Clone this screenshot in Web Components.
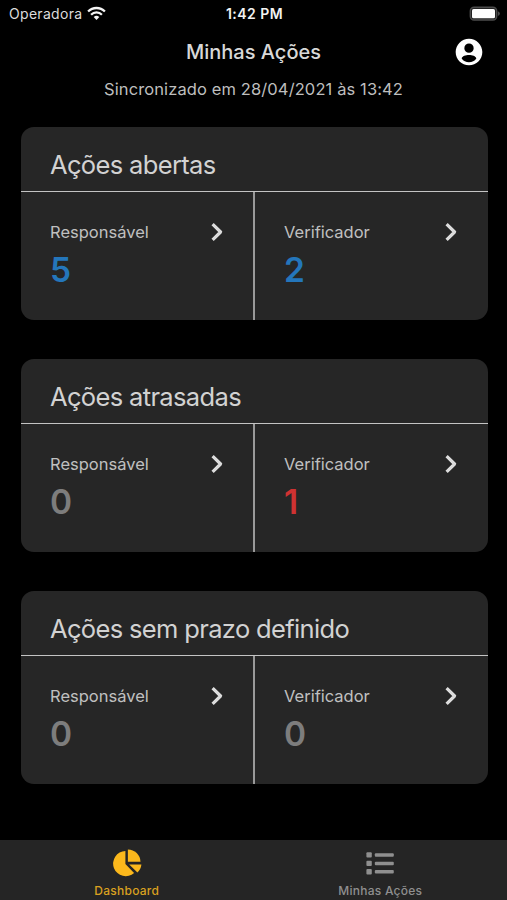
<!DOCTYPE html>
<html lang="pt-BR">
<head>
<meta charset="utf-8">
<meta name="viewport" content="width=device-width, initial-scale=1">
<title>Minhas Ações</title>
<style>
  html, body { height: 100%; }
  body {
    margin: 0;
    background: #000;
    color: #d6d6d6;
    font-family: Inter, "Liberation Sans", sans-serif;
    overflow: hidden;
  }
</style>
</head>
<body>
<app-screen>
  <status-bar slot="top" carrier="Operadora" time="1:42 PM"></status-bar>
  <page-header slot="top" heading="Minhas Ações">Sincronizado em 28/04/2021 às 13:42</page-header>

  <action-card heading="Ações abertas">
    <action-count label="Responsável" tone="info">5</action-count>
    <action-count label="Verificador" tone="info">2</action-count>
  </action-card>
  <action-card heading="Ações atrasadas">
    <action-count label="Responsável">0</action-count>
    <action-count label="Verificador" tone="danger">1</action-count>
  </action-card>
  <action-card heading="Ações sem prazo definido">
    <action-count label="Responsável">0</action-count>
    <action-count label="Verificador">0</action-count>
  </action-card>

  <tab-bar slot="bottom">
    <tab-item label="Dashboard" active>
      <svg width="30" height="30" viewBox="0 0 30 30" fill="currentColor">
        <path d="M13.4 3V15.9L22.1 25A12.6 12.6 0 1 1 13.4 3Z"/>
        <path d="M15.9 1.4A12.6 12.6 0 0 1 28.5 13.7H15.9Z"/>
        <path d="M17.2 16.5H29.4A12.5 12.5 0 0 1 25.4 24.5Z"/>
      </svg>
    </tab-item>
    <tab-item label="Minhas Ações">
      <svg width="30" height="30" viewBox="0 0 30 30" fill="currentColor">
        <rect x="1.4" y="4.2" width="5.4" height="5.4" rx="1"/>
        <rect x="1.4" y="12.7" width="5.4" height="5.4" rx="1"/>
        <rect x="1.4" y="21.1" width="5.4" height="5.4" rx="1"/>
        <rect x="9.8" y="5.2" width="19" height="3.5" rx="1"/>
        <rect x="9.8" y="13.7" width="19" height="3.5" rx="1"/>
        <rect x="9.8" y="22.1" width="19" height="3.5" rx="1"/>
      </svg>
    </tab-item>
  </tab-bar>
</app-screen>

<script>
/**
 * @class AppScreen
 * @extends HTMLElement
 */
class AppScreen extends HTMLElement {
  constructor() {
    super();
    this.attachShadow({ mode: 'open' });
    this.shadowRoot.innerHTML = `
      <style>
        :host {
          display: flex;
          flex-direction: column;
          height: 100vh;
        }

        main {
          flex: 1;
          display: flex;
          flex-direction: column;
          gap: 39px;
          padding: 20px 19.5px 0 20.5px;
        }
      </style>
      <slot name="top"></slot>
      <main><slot></slot></main>
      <slot name="bottom"></slot>
    `;
  }
}

/**
 * @class StatusBar
 * @extends HTMLElement
 */
class StatusBar extends HTMLElement {
  /**
   * @return {void}
   */
  connectedCallback() {
    this.attachShadow({ mode: 'open' });
    this.shadowRoot.innerHTML = `
      <style>
        :host {
          display: grid;
          grid-template-columns: 1fr auto 1fr;
          align-items: center;
          height: 28px;
          padding: 0 7px 0 9px;
          box-sizing: border-box;
          font-size: 14px;
          line-height: 28px;
          color: #dcdcdc;
        }

        .carrier {
          display: flex;
          align-items: center;
          gap: 5px;
          letter-spacing: 0.3px;
        }

        .time {
          font-weight: 600;
          letter-spacing: 0.45px;
          color: #f2f2f2;
        }

        svg {
          display: block;
          margin-top: -2px;
        }

        .battery { justify-self: end; }
      </style>
      <div class="carrier">
        <span>${this.getAttribute('carrier')}</span>
        <svg width="19" height="15" viewBox="0 0 19 15" fill="none" stroke="#f4f4f4" stroke-width="2.3">
          <path d="M1.1 5.5a11.8 11.8 0 0 1 16.8 0"/>
          <path d="M4.1 8.7a7.6 7.6 0 0 1 10.8 0"/>
          <path d="M6.7 11.1a4 4 0 0 1 5.6 0L9.5 14Z" fill="#f4f4f4" stroke="none"/>
        </svg>
      </div>
      <span class="time">${this.getAttribute('time')}</span>
      <svg class="battery" width="31" height="15" viewBox="0 0 31 15">
        <rect x="1.3" y="1.2" width="26.4" height="12.8" rx="3.8" fill="#222" stroke="#4c4c4c" stroke-width="1.4"/>
        <rect x="3" y="2.9" width="23" height="9.4" rx="1.6" fill="#fff"/>
        <path d="M28.9 5.3q2 .6 2 2.3t-2 2.3Z" fill="#4c4c4c"/>
      </svg>
    `;
  }
}

/**
 * @class PageHeader
 * @extends HTMLElement
 */
class PageHeader extends HTMLElement {
  /**
   * @return {void}
   */
  connectedCallback() {
    this.attachShadow({ mode: 'open' });
    this.shadowRoot.innerHTML = `
      <style>
        :host {
          display: block;
          height: 79px;
          padding-top: 8px;
          box-sizing: border-box;
        }

        .row {
          display: grid;
          grid-template-columns: 1fr auto 1fr;
          align-items: center;
          height: 28px;
          padding: 0 22px;
        }

        h1 {
          grid-column: 2;
          margin: 0;
          font-size: 20px;
          font-weight: 550;
          line-height: 26px;
          color: #d8d8d8;
        }

        p {
          margin: 13px 0 0;
          text-align: center;
          font-size: 16.5px;
          line-height: 24px;
          letter-spacing: 0.11px;
          color: #bebebe;
        }

        svg {
          display: block;
          justify-self: end;
        }
      </style>
      <div class="row">
        <h1>${this.getAttribute('heading')}</h1>
        <svg width="32" height="32" viewBox="0 0 24 24" fill="#fff">
          <path d="M12 2C6.48 2 2 6.48 2 12s4.48 10 10 10 10-4.48 10-10S17.52 2 12 2zm0 3.6a3.5 3.5 0 1 1 0 7 3.5 3.5 0 0 1 0-7zm0 14c-2.3 0-4.2-.9-5.5-2.8 .4-1.6 3-2.5 5.5-2.5s5.1.9 5.5 2.5c-1.3 1.9-3.2 2.8-5.5 2.8z"/>
        </svg>
      </div>
      <p><slot></slot></p>
    `;
  }
}

/**
 * @class ActionCard
 * @extends HTMLElement
 */
class ActionCard extends HTMLElement {
  /**
   * @return {void}
   */
  connectedCallback() {
    this.attachShadow({ mode: 'open' });
    this.shadowRoot.innerHTML = `
      <style>
        :host {
          display: flex;
          flex-direction: column;
          height: 193px;
          border-radius: 13px;
          background: #262626;
          overflow: hidden;
        }

        h2 {
          margin: 0;
          height: 63.5px;
          padding: 12px 29.5px 0;
          box-sizing: border-box;
          font-size: 25.5px;
          font-weight: 400;
          line-height: 52px;
          letter-spacing: -0.65px;
          color: #d2d2d2;
        }

        .counts {
          flex: 1;
          display: grid;
          grid-template-columns: 234px 1fr;
          border-top: 1px solid #c4c4c4;
        }

        ::slotted(action-count:first-child) {
          border-right: 2px solid #999;
        }
      </style>
      <h2>${this.getAttribute('heading')}</h2>
      <div class="counts"><slot></slot></div>
    `;
  }
}

/**
 * @class ActionCount
 * @extends HTMLElement
 */
class ActionCount extends HTMLElement {
  /**
   * @return {void}
   */
  connectedCallback() {
    this.attachShadow({ mode: 'open' });
    this.shadowRoot.innerHTML = `
      <style>
        :host {
          display: block;
          box-sizing: border-box;
          padding: 28px 0 0 29.5px;
          color: #7d7d7d;
        }

        :host([tone="info"]) { color: #2476bb; }
        :host([tone="danger"]) { color: #cf3232; }

        .row {
          display: flex;
          align-items: center;
          justify-content: space-between;
          width: 174px;
          height: 24px;
          font-size: 16.5px;
          color: #c0c0c0;
        }

        .value {
          font-size: 33.5px;
          font-weight: 600;
          line-height: 42px;
          letter-spacing: -0.5px;
          margin-top: 5px;
        }
      </style>
      <div class="row">
        <span>${this.getAttribute('label')}</span>
        <svg width="14" height="20" viewBox="0 0 14 20" fill="none" stroke="#dcdcdc" stroke-width="3.2">
          <path d="M2.6 2.2L10.6 10L2.6 17.8" stroke-linejoin="round"/>
        </svg>
      </div>
      <div class="value"><slot></slot></div>
    `;
  }
}

/**
 * @class TabBar
 * @extends HTMLElement
 */
class TabBar extends HTMLElement {
  constructor() {
    super();
    this.attachShadow({ mode: 'open' });
    this.shadowRoot.innerHTML = `
      <style>
        :host {
          display: grid;
          grid-template-columns: 1fr 1fr;
          height: 60px;
          background: #252525;
        }
      </style>
      <slot></slot>
    `;
  }
}

/**
 * @class TabItem
 * @extends HTMLElement
 */
class TabItem extends HTMLElement {
  /**
   * @return {void}
   */
  connectedCallback() {
    this.attachShadow({ mode: 'open' });
    this.shadowRoot.innerHTML = `
      <style>
        :host {
          display: flex;
          flex-direction: column;
          align-items: center;
          padding-top: 8px;
          color: #8f8f8f;
        }

        :host([active]) { color: #fbb81c; }

        span {
          margin-top: 4px;
          font-size: 12px;
          font-weight: 500;
          line-height: 18px;
          letter-spacing: 0.25px;
        }

        :host([active]) span { color: #d9a020; }
      </style>
      <slot></slot>
      <span>${this.getAttribute('label')}</span>
    `;
  }
}

customElements.define('app-screen', AppScreen);
customElements.define('status-bar', StatusBar);
customElements.define('page-header', PageHeader);
customElements.define('action-card', ActionCard);
customElements.define('action-count', ActionCount);
customElements.define('tab-bar', TabBar);
customElements.define('tab-item', TabItem);
</script>
</body>
</html>
